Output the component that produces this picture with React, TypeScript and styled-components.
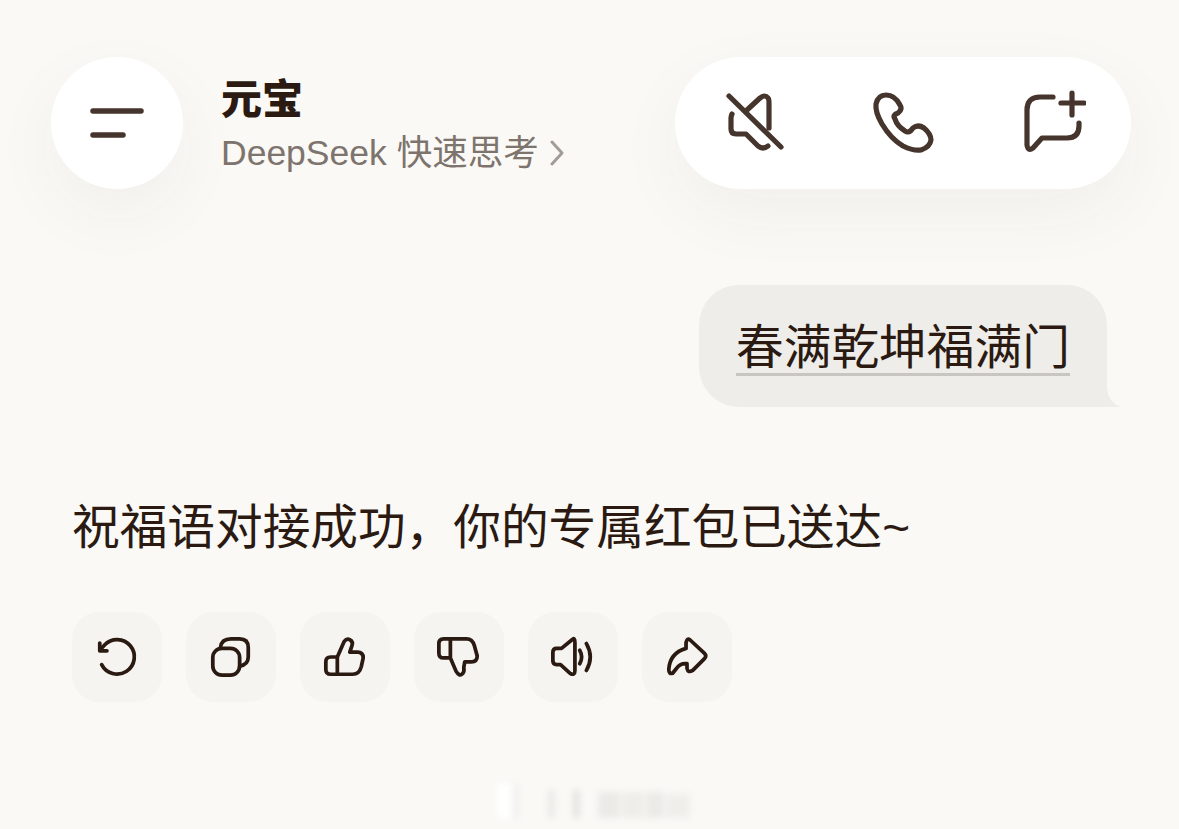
import React from "react";
import styled, { createGlobalStyle } from "styled-components";

const Global = createGlobalStyle`
  html, body { margin: 0; padding: 0; background: #faf9f6; }
  #root { width: 1179px; height: 829px; overflow: hidden; }
  * { box-sizing: border-box; }
`;
const FONT = `"Liberation Sans", "Noto Sans CJK SC", sans-serif`;

const Page = styled.div`
  width: 1179px; height: 829px; overflow: hidden; background: #faf9f6;
  font-family: ${FONT}; color: #2a1a12;
  display: flex; flex-direction: column;
`;
const Header = styled.header`
  display: flex; align-items: flex-start; padding: 57px 48px 0 51px;
`;
const MenuButton = styled.button`
  width: 132px; height: 132px; border: 0; padding: 0; border-radius: 50%; background: #fff;
  box-shadow: 0 24px 70px rgba(70, 55, 40, 0.05);
  display: flex; align-items: center; justify-content: center; flex: none;
`;
const TitleBlock = styled.div`
  margin-left: 38px; padding-top: 18px; flex: 1; display: flex; flex-direction: column; gap: 3px;
`;
const Title = styled.div`
  font-size: 41px; line-height: 50px; font-weight: 900; color: #2a1a12;
`;
const Sub = styled.div`
  font-size: 35.5px; line-height: 50px; color: #7d746d; display: flex; align-items: center; gap: 10px;
`;
const Pill = styled.div`
  width: 456px; height: 132px; border-radius: 66px; background: #fff;
  box-shadow: 0 24px 70px rgba(70, 55, 40, 0.05);
  display: flex; align-items: center; gap: 83px; padding-left: 47px;
`;
const BubbleRow = styled.div`
  display: flex; justify-content: flex-end; padding-right: 72px; margin-top: 96px;
`;
const Bubble = styled.div`
  position: relative; width: 408px; height: 122px; padding: 37px 37px 0;
  background: #eeedea; border-radius: 40px 40px 0 40px;
  &::after {
    content: ""; position: absolute; right: -13px; bottom: 0; width: 13px; height: 18px;
    background: #eeedea; clip-path: path("M0 0 Q1 12 13 18 L0 18 Z");
  }
`;
const Marked = styled.span`
  display: block; font-size: 47.7px; line-height: 51px; white-space: nowrap;
  border-bottom: 3px solid #c8c6c1;
`;
const Reply = styled.div`
  margin: 93px 0 0 72px; font-size: 47.7px; line-height: 56px; white-space: nowrap; letter-spacing: -0.03px;
`;
const Actions = styled.div`
  display: flex; gap: 24px; margin: 56px 0 0 72px;
`;
const ActionButton = styled.button`
  width: 90px; height: 90px; border: 0; padding: 0; border-radius: 27px; background: #f5f4f1;
  display: flex; align-items: center; justify-content: center;
`;
const Watermark = styled.div`
  display: flex; align-items: flex-end; margin: 82px 0 0 497px; height: 34px; filter: blur(3px);
`;
const Smear = styled.div<{ $w: number; $h: number; $c: string; $gap?: number }>`
  width: ${p => p.$w}px; height: ${p => p.$h}px; background: ${p => p.$c}; margin-left: ${p => p.$gap ?? 0}px;
`;
const IconSvg = styled.svg`
  display: block; flex: none; fill: none; stroke: currentColor; stroke-linecap: round; stroke-linejoin: round;
`;
const HeadIcon = styled(IconSvg).attrs({ width: 66, height: 66, viewBox: "0 0 66 66" })`
  color: #46352c; stroke-width: 5.2;
`;
const ActIcon = styled(IconSvg).attrs({ width: 46, height: 46, viewBox: "0 0 48 48" })`
  color: #2a1a12; stroke-width: 3.9;
`;

const acts = [
  <><path d="M8 32A18 18 0 1 0 11 11.5L6.5 16.5" /><path d="M6 9.5V17.5H13.5" /></>,
  <><rect x="5" y="15" width="28" height="28" rx="9.5" /><path d="M13 14Q14 5 24 5H33Q42 5 42 14V24Q42 32 33 33.5" /></>,
  <path d="M16 24L23 8Q26 4 29 6Q33 8 31 13L29 19H37Q43 19 43 25L41 34Q39 42 32 42H9Q4 42 4 37V29Q4 24 9 24H16V42" />,
  <path d="M15 25L21 39Q24 44 27 42Q30 40 29 35L30 29H37Q43 29 43 23L40 12Q38 5 32 5H8Q3 5 3 10V20Q3 25 8 25H15V5" />,
  <><path d="M23 6L12 15H7Q3 15 3 19V28Q3 32 7 32H11L21 41Q26 44 26 38V9Q26 3 23 6Z" /><path d="M31 17Q35 24 31 31" /><path d="M38 10Q46 24 38 38" /></>,
  <path d="M27 6L42 20Q45 23 42 26L30 38Q25 41 24 36V31Q17 30 13 36L9 41Q5 42 5 37Q6 20 23 15V9Q24 4 27 6Z" />,
];

export default function App() {
  return (
    <Page>
      <Global />
      <Header>
        <MenuButton aria-label="菜单">
          <svg width="54" height="30" viewBox="0 0 54 30" fill="none" stroke="#46352c" strokeWidth="5.5" strokeLinecap="round">
            <path d="M3 3H51" /><path d="M3 27H33" />
          </svg>
        </MenuButton>
        <TitleBlock>
          <Title>元宝</Title>
          <Sub>
            DeepSeek 快速思考
            <svg width="16" height="26" viewBox="0 0 16 26" fill="none" stroke="#a39c96" strokeWidth="3" strokeLinecap="round" strokeLinejoin="round">
              <path d="M3 2L13 13L3 24" />
            </svg>
          </Sub>
        </TitleBlock>
        <Pill>
          <HeadIcon>
            <path d="M7 6L59 57" />
            <path d="M25 20L38 8Q43 4 46 8Q47 9 47 13V38" />
            <path d="M10 24Q9 26 9 28V39Q9 44 14 44H24L36 56Q41 60 46 56" />
          </HeadIcon>
          <HeadIcon>
            <path d="M15 5Q7 5 5 14Q4 22 11 34Q20 49 32 56Q42 61 50 60Q59 57 60 50Q60 44 53 38Q47 34 42 38Q38 44 34 41Q26 36 24 29Q21 25 27 23Q32 19 29 15Q24 5 15 5Z" />
          </HeadIcon>
          <HeadIcon>
            <path d="M33 7H20Q7 7 7 20V55Q8 62 13 58L22 48H47Q59 48 59 36V33" />
            <path d="M52 3V25" /><path d="M41 13H64" />
          </HeadIcon>
        </Pill>
      </Header>
      <BubbleRow>
        <Bubble><Marked>春满乾坤福满门</Marked></Bubble>
      </BubbleRow>
      <Reply>祝福语对接成功，你的专属红包已送达~</Reply>
      <Actions>
        {acts.map((a, i) => (
          <ActionButton key={i}><ActIcon>{a}</ActIcon></ActionButton>
        ))}
      </Actions>
      <Watermark>
        <Smear $w={16} $h={34} $c="#ffffff" />
        <Smear $w={5} $h={34} $c="#efedea" />
        <Smear $w={7} $h={28} $c="#ebe9e6" $gap={30} />
        <Smear $w={7} $h={28} $c="#e5e3e0" $gap={18} />
        <Smear $w={22} $h={26} $c="#eceae7" $gap={18} />
        <Smear $w={22} $h={26} $c="#efedea" $gap={2} />
        <Smear $w={18} $h={26} $c="#ecEae7" $gap={2} />
        <Smear $w={24} $h={24} $c="#f0eeeb" $gap={2} />
      </Watermark>
    </Page>
  );
}
